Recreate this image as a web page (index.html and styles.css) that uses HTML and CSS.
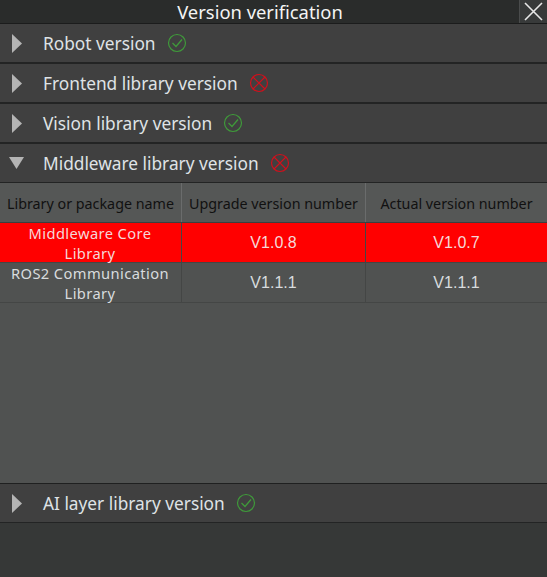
FILE: index.html
```html
<!DOCTYPE html>
<html lang="en">
<head>
  <meta charset="UTF-8">
  <title>Version verification</title>
  <link rel="stylesheet" href="styles.css">
</head>
<body>
  <header class="titlebar">
    <span class="title">Version verification</span>
    <button class="close" aria-label="Close">
      <svg width="21" height="21" viewBox="0 0 21 21"><path d="M2 2 L19 19 M19 2 L2 19"/></svg>
    </button>
  </header>

  <div class="row">
    <span class="arrow"><svg width="10" height="19" viewBox="0 0 10 19"><path d="M0 0 L10 9.5 L0 19 Z"/></svg></span>
    <span class="label">Robot version</span>
    <svg class="status ok" width="20" height="20" viewBox="0 0 20 20"><circle cx="10" cy="10" r="8.5"/><path d="M5.5 10 L9 13.5 L15 6.5"/></svg>
  </div>
  <div class="row">
    <span class="arrow"><svg width="10" height="19" viewBox="0 0 10 19"><path d="M0 0 L10 9.5 L0 19 Z"/></svg></span>
    <span class="label">Frontend library version</span>
    <svg class="status bad" width="20" height="20" viewBox="0 0 20 20"><circle cx="10" cy="10" r="8.5"/><path d="M4 4 L16 16 M16 4 L4 16"/></svg>
  </div>
  <div class="row">
    <span class="arrow"><svg width="10" height="19" viewBox="0 0 10 19"><path d="M0 0 L10 9.5 L0 19 Z"/></svg></span>
    <span class="label">Vision library version</span>
    <svg class="status ok" width="20" height="20" viewBox="0 0 20 20"><circle cx="10" cy="10" r="8.5"/><path d="M5.5 10 L9 13.5 L15 6.5"/></svg>
  </div>
  <div class="row open">
    <span class="arrow"><svg width="15" height="12" viewBox="0 0 15 12"><path d="M0 0 L15 0 L7.5 12 Z"/></svg></span>
    <span class="label">Middleware library version</span>
    <svg class="status bad" width="20" height="20" viewBox="0 0 20 20"><circle cx="10" cy="10" r="8.5"/><path d="M4 4 L16 16 M16 4 L4 16"/></svg>
  </div>

  <section class="panel">
    <table class="versions">
      <tr><th>Library or package name</th><th>Upgrade version number</th><th>Actual version number</th></tr>
      <tr class="mismatch"><td><div class="name">Middleware Core<br>Library</div></td><td class="num">V1.0.8</td><td class="num">V1.0.7</td></tr>
      <tr><td><div class="name">ROS2 Communication<br>Library</div></td><td class="num">V1.1.1</td><td class="num">V1.1.1</td></tr>
    </table>
  </section>

  <div class="row">
    <span class="arrow"><svg width="10" height="19" viewBox="0 0 10 19"><path d="M0 0 L10 9.5 L0 19 Z"/></svg></span>
    <span class="label">AI layer library version</span>
    <svg class="status ok" width="20" height="20" viewBox="0 0 20 20"><circle cx="10" cy="10" r="8.5"/><path d="M5.5 10 L9 13.5 L15 6.5"/></svg>
  </div>
</body>
</html>
```

FILE: styles.css
```css
html, body { height: 100%; }
body { margin: 0; background: #363837; color: #e4e6e6; font-family: "Noto Sans", sans-serif; overflow: hidden; }
.titlebar { height: 23px; padding-right: 27px; background: #2a2c2b; display: flex; align-items: center; justify-content: center; position: relative; border-bottom: 1px solid #1b1c1c; }
.title { font-size: 18.4px; color: #f4f4f4; }
.close { position: absolute; right: 0; top: 0; width: 28px; height: 23px; padding: 0; background: #383a3a; border: 0; border-left: 1px solid #4a4c4c; display: flex; align-items: center; justify-content: center; }
.close path { stroke: #e8e8e8; stroke-width: 1.6; fill: none; }
.row { height: 38px; display: flex; align-items: center; background: #404040; border-bottom: 2px solid #232424; }
.row.open, .row:last-child { border-bottom-width: 1px; }
.arrow { width: 33px; flex: none; display: flex; justify-content: center; }
.arrow path { fill: #b4b4b4; }
.label { margin-left: 10px; font-size: 17.3px; color: #dfe3e6; }
.status { margin-left: 11px; }
.status circle, .status path { fill: none; stroke-width: 1.2; }
.ok circle, .ok path { stroke: #3f9a3a; }
.bad circle, .bad path { stroke: #d0101c; }
.panel { height: 300px; background: #505251; border-bottom: 1px solid #1f2020; }
.versions { width: 100%; border-collapse: collapse; table-layout: fixed; font-size: 14.3px; text-align: center; }
.versions th:first-child { width: 181px; }
.versions th:nth-child(2) { width: 183px; }
.versions th { height: 37px; padding: 2px 0 0; font-weight: normal; color: #111; background: #555756; border-right: 1px solid #6a6c6c; border-bottom: 1px solid #3c3e3e; }
.versions td { height: 39px; padding: 0; font-size: 14.7px; letter-spacing: 0.4px; line-height: 20px; color: #d8dcde; border-right: 1px solid #444645; border-bottom: 1px solid #444645; }
.name { height: 38px; margin-top: -2px; padding-right: 1px; }
.versions th:last-child, .versions td:last-child { border-right: 0; }
.versions .num { font-family: "Liberation Sans", sans-serif; font-size: 16px; letter-spacing: 0; }
.mismatch td { background: #ff0000; color: #f6d8d8; }
```
